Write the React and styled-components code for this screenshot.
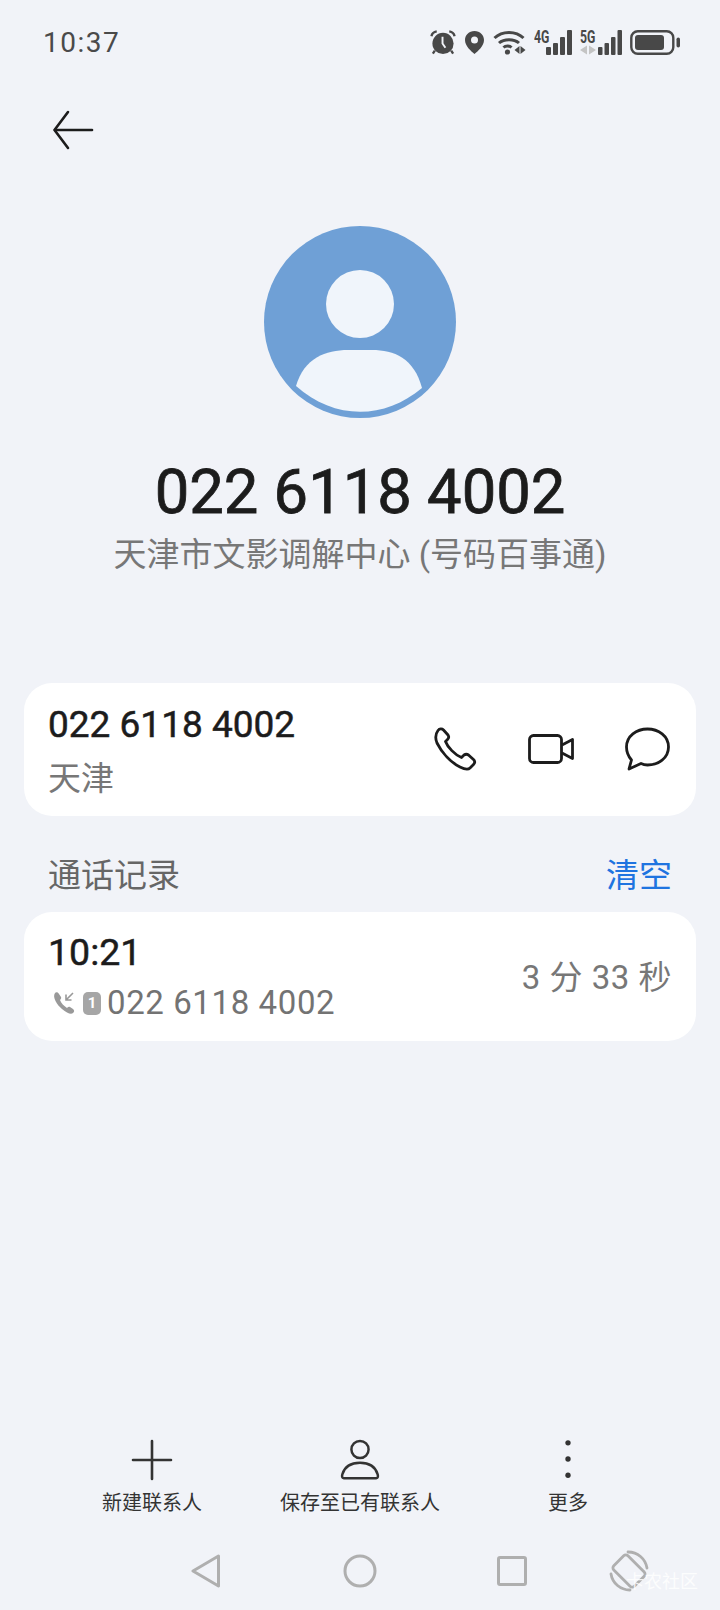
import React from "react";
import styled, { createGlobalStyle } from "styled-components";

const FONT = `Roboto, "Noto Sans CJK SC", sans-serif`;

export default function App() {
	return (
		<Page>
			<GlobalStyle />
			<StatusBar>
				<Clock>10:37</Clock>
				<StatusIcons>
					<AlarmIcon />
					<PinIcon />
					<WifiIcon />
					<SignalIcon label="4G" width={38} barWidth={5} step={7} />
					<SignalIcon label="5G" width={42} barWidth={4.5} step={6.5} arrows />
					<BatteryIcon />
				</StatusIcons>
			</StatusBar>

			<BackRow>
				<svg width="42" height="40" viewBox="0 0 42 40" fill="none" stroke="#1c1c1c" strokeWidth="2.6" strokeLinecap="round" strokeLinejoin="round">
					<path d="M16 2 L2.5 20 L16 38" />
					<path d="M3 20 H40" />
				</svg>
			</BackRow>

			<Hero>
				<Avatar />
				<HeroNumber>022 6118 4002</HeroNumber>
				<HeroLabel>天津市文影调解中心 (号码百事通)</HeroLabel>
			</Hero>

			<NumberCard>
				<div>
					<CardNumber>022 6118 4002</CardNumber>
					<CardCity>天津</CardCity>
				</div>
				<CardActions>
					<PhoneIcon />
					<VideoIcon />
					<ChatIcon />
				</CardActions>
			</NumberCard>

			<SectionHeader>
				<SectionTitle>通话记录</SectionTitle>
				<ClearLink>清空</ClearLink>
			</SectionHeader>

			<LogCard>
				<div>
					<LogTime>10:21</LogTime>
					<LogDetail>
						<IncomingIcon />
						<SimBadge>1</SimBadge>
						<LogNumber>022 6118 4002</LogNumber>
					</LogDetail>
				</div>
				<Duration>3 分 33 秒</Duration>
			</LogCard>

			<BottomBar>
				<BarItem>
					<svg width="42" height="42" viewBox="0 0 42 42" fill="none" stroke="#333" strokeWidth="2.6" strokeLinecap="round">
						<path d="M21 2 V40 M2 21 H40" />
					</svg>
					<BarLabel>新建联系人</BarLabel>
				</BarItem>
				<BarItem>
					<svg width="42" height="42" viewBox="0 0 42 44" fill="none" stroke="#333" strokeWidth="2.6">
						<circle cx="21" cy="11" r="9" />
						<path d="M4 41 C2 41 2 39 2.5 37 C5 29 12 25 21 25 C30 25 37 29 39.5 37 C40 39 40 41 38 41 Z" strokeLinejoin="round" />
					</svg>
					<BarLabel>保存至已有联系人</BarLabel>
				</BarItem>
				<BarItem>
					<svg width="42" height="42" viewBox="0 0 42 44" fill="#333">
						<circle cx="21" cy="4" r="2.8" />
						<circle cx="21" cy="21" r="2.8" />
						<circle cx="21" cy="38" r="2.8" />
					</svg>
					<BarLabel>更多</BarLabel>
				</BarItem>
			</BottomBar>

			<NavBar>
				<svg width="30" height="34" viewBox="0 0 30 34" fill="none" stroke="#afafaf" strokeWidth="3" strokeLinejoin="round">
					<path d="M27.5 2 L2 17 L27.5 32 Z" />
				</svg>
				<svg width="34" height="34" viewBox="0 0 34 34" fill="none" stroke="#afafaf" strokeWidth="3">
					<circle cx="17" cy="17" r="15" />
				</svg>
				<svg width="30" height="30" viewBox="0 0 30 30" fill="none" stroke="#afafaf" strokeWidth="3" strokeLinejoin="round">
					<rect x="1.5" y="1.5" width="27" height="27" rx="1.5" />
				</svg>
				<svg width="42" height="42" viewBox="0 0 42 42" fill="none" stroke="#afafaf" strokeWidth="2.8" strokeLinecap="round" strokeLinejoin="round">
					<rect x="11" y="6.5" width="20" height="29" rx="3" transform="rotate(-45 21 21)" />
					<path d="M20 2 A19 19 0 0 1 39 18 M22 40 A19 19 0 0 1 3 24" />
				</svg>
				<Watermark>卡农社区</Watermark>
			</NavBar>
		</Page>
	);
}

const AlarmIcon = () => (
	<svg width="26" height="25" viewBox="0 0 27 25">
		<circle cx="13.5" cy="13.5" r="11" fill="#484848" />
		<path d="M1.5 6 C2 3 4 1.5 7 1 M25.5 6 C25 3 23 1.5 20 1" stroke="#484848" strokeWidth="2.4" fill="none" />
		<path d="M5 21 L3 24 M22 21 L24 24" stroke="#484848" strokeWidth="2.4" />
		<path d="M13 6.5 V13.5 L16 18" stroke="#f1f3f8" strokeWidth="2" fill="none" />
	</svg>
);

const PinIcon = () => (
	<svg width="21" height="25" viewBox="0 0 21 25">
		<path d="M10.5 1 C5 1 1 5 1 10 C1 16 7 21 10.5 24 C14 21 20 16 20 10 C20 5 16 1 10.5 1 Z" fill="#484848" />
		<circle cx="10.5" cy="10" r="3.5" fill="#f1f3f8" />
	</svg>
);

const WifiIcon = () => (
	<svg width="33" height="25" viewBox="0 0 33 25" fill="none" stroke="#484848" strokeWidth="3">
		<path d="M1.5 8 C9 0.5 23 0.5 30.5 8" />
		<path d="M6 13 C11 8.5 21 8.5 26 13" />
		<path d="M10.5 17.5 C12.5 15.5 16.5 15.5 18.5 17.5" />
		<circle cx="14.5" cy="22" r="2.6" fill="#484848" stroke="none" />
		<path d="M21.5 20 L26.5 16 V24 Z M32.5 20 L27.5 16 V24 Z" fill="#484848" stroke="none" />
	</svg>
);

const SignalIcon = ({ label, width, barWidth, step, arrows }) => {
	const heights = [8, 12, 18, 25];
	const start = width - step * 3 - barWidth;
	return (
		<SignalWrap $width={width}>
			<SignalLabel>{label}</SignalLabel>
			<svg width={width} height="25" viewBox={`0 0 ${width} 25`} fill="#484848">
				{arrows && <path d="M0 20 L7 15.5 V24.5 Z M16 20 L9 15.5 V24.5 Z" fill="#c4c4c4" />}
				{heights.map((h, i) => (
					<rect key={h} x={start + step * i} y={25 - h} width={barWidth} height={h} rx="1" />
				))}
			</svg>
		</SignalWrap>
	);
};

const BatteryIcon = () => (
	<svg width="50" height="25" viewBox="0 0 50 25">
		<rect x="1.3" y="1.3" width="42" height="22.4" rx="6.5" fill="none" stroke="#484848" strokeWidth="2.4" />
		<rect x="5" y="5" width="29" height="15" rx="3" fill="#484848" />
		<rect x="46.5" y="7.5" width="3.5" height="10" rx="1.75" fill="#484848" />
	</svg>
);

const Avatar = () => (
	<svg width="192" height="192" viewBox="0 0 192 192">
		<circle cx="96" cy="96" r="96" fill="#6fa0d6" />
		<circle cx="96" cy="78" r="34" fill="#f0f5fb" />
		<path d="M32 160 C40 132 62 124 84 124 H108 C130 124 150 132 158 162 C120 194 70 194 32 160 Z" fill="#f0f5fb" />
	</svg>
);

const PhoneIcon = () => (
	<svg width="44" height="44" viewBox="0 0 44 44" fill="none" stroke="#1c1c1c" strokeWidth="2.8" strokeLinejoin="round">
		<path d="M5 3.5 C6.5 1.5 9 1.5 10.5 3 L15 8 C16 9.5 16 11 14.5 12.5 L12.5 14.5 C14.5 20 22 28 28.5 30.5 L31 28 C32.5 27 34 27 35.5 28 L41 33 C42 34.5 42 36 40.5 37.5 L37 41 C35 43 31 42 27 40 C18 35.5 9 26 4 16 C2 11 2 7.5 5 3.5 Z" />
	</svg>
);

const VideoIcon = () => (
	<svg width="46" height="30" viewBox="0 0 46 30" fill="none" stroke="#1c1c1c" strokeWidth="2.8" strokeLinejoin="round">
		<rect x="1.5" y="1.5" width="32" height="27" rx="4" />
		<path d="M34 11 L44.5 5.5 V24.5 L34 19" />
	</svg>
);

const ChatIcon = () => (
	<svg width="45" height="44" viewBox="0 0 45 44" fill="none" stroke="#1c1c1c" strokeWidth="2.8" strokeLinejoin="round">
		<path d="M22.5 2 C33.5 2 43.5 9 43.5 20 C43.5 31 33.5 38 22.5 38 C20 38 18 37.5 16 36.5 L4 42 L6.5 33 C3 29 1.5 25 1.5 20 C1.5 9 11.5 2 22.5 2 Z" />
	</svg>
);

const IncomingIcon = () => (
	<svg width="24" height="24" viewBox="0 0 24 24">
		<path d="M3 2 C4 1 6 1 7 3 L9 6 C9.5 7 9 8 8 9 C9 12 12 15 15 17 C16 16 17 15.5 18 16 L21 18 C22.5 19 22.5 21 21 22 C19 24 15 22 10 18 C5 14 0 6 3 2 Z" fill="#999" />
		<path d="M21 2 L14.5 8.5 M14 3.5 V9 H19.5" stroke="#999" strokeWidth="1.6" fill="none" />
	</svg>
);

const GlobalStyle = createGlobalStyle`
	html, body {
		margin: 0;
		padding: 0;
		background: #f1f3f8;
		font-family: ${FONT};
	}
`;

const Page = styled.div`
	width: 720px;
	height: 1610px;
	background: #f1f3f8;
	display: flex;
	flex-direction: column;
	overflow: hidden;
`;

const StatusBar = styled.div`
	height: 84px;
	padding: 0 40px 0 43px;
	display: flex;
	align-items: center;
	justify-content: space-between;
	box-sizing: border-box;
`;

const Clock = styled.span`
	font-size: 28px;
	letter-spacing: 1.5px;
	color: #4a4a4a;
`;

const StatusIcons = styled.div`
	display: flex;
	align-items: center;
	gap: 8px;
`;

const SignalWrap = styled.div`
	position: relative;
	display: flex;
	width: ${(props) => props.$width}px;
	height: 25px;
`;

const SignalLabel = styled.span`
	position: absolute;
	left: 0;
	top: 0;
	font-size: 18px;
	line-height: 14px;
	font-weight: 700;
	color: #484848;
	transform: scaleX(0.68);
	transform-origin: left top;
`;

const BackRow = styled.div`
	height: 142px;
	padding: 26px 0 0 52px;
	box-sizing: border-box;
`;

const Hero = styled.div`
	display: flex;
	flex-direction: column;
	align-items: center;
`;

const HeroNumber = styled.div`
	margin-top: 39px;
	font-size: 61.5px;
	line-height: 70px;
	-webkit-text-stroke: 0.8px #1c1c1c;
	color: #1c1c1c;
`;

const HeroLabel = styled.div`
	margin-top: 6px;
	font-size: 33px;
	line-height: 44px;
	color: #777;
`;

const Card = styled.div`
	margin: 0 24px;
	padding: 0 26px 0 24px;
	background: #fff;
	border-radius: 28px;
	display: flex;
	align-items: center;
	justify-content: space-between;
`;

const NumberCard = styled(Card)`
	margin-top: 106px;
	height: 133px;
`;

const CardNumber = styled.div`
	margin-top: 3px;
	font-size: 37px;
	line-height: 46px;
	-webkit-text-stroke: 0.5px #1c1c1c;
	color: #1c1c1c;
`;

const CardCity = styled.div`
	margin-top: 9px;
	font-size: 33px;
	line-height: 44px;
	color: #777;
`;

const CardActions = styled.div`
	display: flex;
	align-items: center;
	gap: 51px;
	margin-bottom: 2px;
`;

const SectionHeader = styled.div`
	margin-top: 32px;
	padding: 0 48px;
	height: 50px;
	display: flex;
	align-items: center;
	justify-content: space-between;
`;

const SectionTitle = styled.span`
	font-size: 33px;
	color: #666;
`;

const ClearLink = styled.span`
	font-size: 33px;
	color: #1f74e0;
`;

const LogCard = styled(Card)`
	margin-top: 14px;
	height: 129px;
	padding-right: 24px;
`;

const LogTime = styled.div`
	font-size: 37.5px;
	line-height: 46px;
	-webkit-text-stroke: 0.5px #1c1c1c;
	color: #1c1c1c;
`;

const LogDetail = styled.div`
	margin-top: 7px;
	display: flex;
	align-items: center;
	gap: 7px;
	padding-left: 4px;
`;

const SimBadge = styled.span`
	width: 18px;
	height: 23px;
	border-radius: 5px;
	background: #a6a6a6;
	color: #fff;
	font-size: 15px;
	font-weight: 700;
	display: flex;
	align-items: center;
	justify-content: center;
`;

const LogNumber = styled.span`
	margin-left: -1px;
	font-size: 33px;
	line-height: 42px;
	color: #737373;
	letter-spacing: 0.6px;
`;

const Duration = styled.span`
	margin-bottom: 4px;
	font-size: 33px;
	letter-spacing: 0.5px;
	color: #777;
`;

const BottomBar = styled.div`
	margin-top: auto;
	padding-left: 48px;
	display: grid;
	grid-template-columns: repeat(3, 208px);
	justify-items: center;
`;

const BarItem = styled.div`
	display: flex;
	flex-direction: column;
	align-items: center;
	gap: 8px;
`;

const BarLabel = styled.span`
	font-size: 20px;
	line-height: 28px;
	color: #333;
	white-space: nowrap;
`;

const NavBar = styled.div`
	position: relative;
	margin-top: 37px;
	height: 56px;
	padding-left: 191px;
	box-sizing: border-box;
	display: grid;
	grid-template-columns: 152px 154px 111px auto;
	grid-auto-rows: 34px;
	align-items: center;
`;

const Watermark = styled.span`
	position: absolute;
	left: 626px;
	top: 13px;
	font-size: 18px;
	color: rgba(255, 255, 255, 0.85);
`;
